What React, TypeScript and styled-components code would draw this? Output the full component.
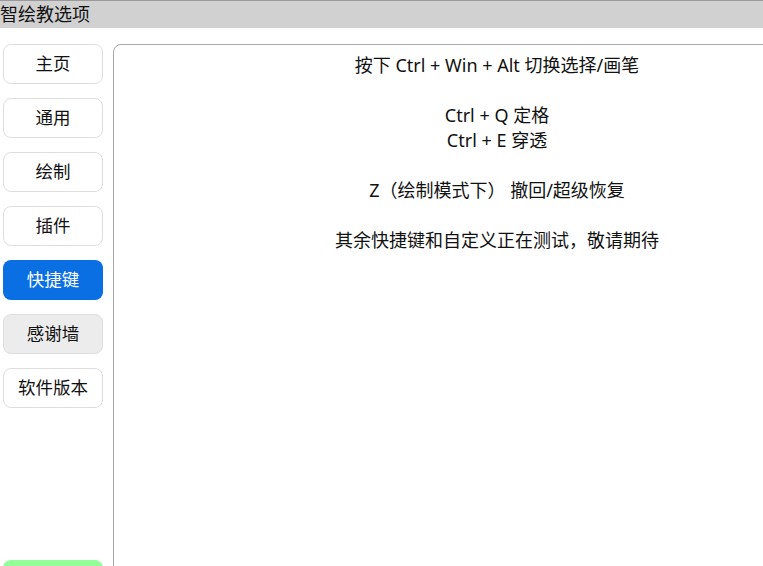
import React from "react";
import styled, { createGlobalStyle } from "styled-components";

const Global = createGlobalStyle`
  html, body { margin: 0; padding: 0; background: #fff; overflow: hidden; }
  body { font-family: "Noto Sans", "Noto Sans CJK SC", sans-serif; color: #111; }
`;

const Page = styled.div`
  width: 763px;
  height: 566px;
  overflow: hidden;
  display: flex;
  flex-direction: column;
`;

const TitleBar = styled.div`
  height: 27px;
  flex: none;
  background: #d1d1d1;
  border-top: 1px solid #9a9a9a;
  font-size: 18px;
  line-height: 26px;
  color: #111;
`;

const Body = styled.div`
  display: flex;
  padding: 16px 0 0 3px;
  gap: 10px;
  flex: 1;
  min-height: 0;
`;

const Sidebar = styled.div`
  width: 100px;
  flex: none;
  display: flex;
  flex-direction: column;
  gap: 14px;
  height: 556px;
`;

const NavButton = styled.div<{ $variant?: "active" | "hover" | "green" }>`
  height: 40px;
  box-sizing: border-box;
  padding-bottom: 4px;
  border-radius: 8px;
  border: 1px solid ${(p) => (p.$variant === "active" || p.$variant === "green" ? "transparent" : "#dedede")};
  background: ${(p) =>
    p.$variant === "active" ? "#0a6fe3" : p.$variant === "hover" ? "#ececec" : p.$variant === "green" ? "#92ff98" : "#fff"};
  color: ${(p) => (p.$variant === "active" ? "#fff" : "#111")};
  display: flex;
  align-items: center;
  justify-content: center;
  font-size: 17.5px;
  flex: none;
  ${(p) => (p.$variant === "green" ? "margin-top: auto;" : "")}
`;

const Panel = styled.div`
  width: 768px;
  flex: none;
  height: 600px;
  box-sizing: border-box;
  border: 1px solid #a8a8a8;
  border-top-left-radius: 8px;
  padding-top: 8px;
  display: flex;
  flex-direction: column;
  align-items: center;
  font-size: 18px;
  line-height: 25px;
`;

const Line = styled.div`
  height: 25px;
  white-space: pre;
`;

export default function App() {
  const lines = [
    "按下 Ctrl + Win + Alt 切换选择/画笔",
    "",
    "Ctrl + Q 定格",
    "Ctrl + E 穿透",
    "",
    "Z（绘制模式下） 撤回/超级恢复",
    "",
    "其余快捷键和自定义正在测试，敬请期待",
  ];
  return (
    <Page>
      <Global />
      <TitleBar>智绘教选项</TitleBar>
      <Body>
        <Sidebar>
          <NavButton>主页</NavButton>
          <NavButton>通用</NavButton>
          <NavButton>绘制</NavButton>
          <NavButton>插件</NavButton>
          <NavButton $variant="active">快捷键</NavButton>
          <NavButton $variant="hover">感谢墙</NavButton>
          <NavButton>软件版本</NavButton>
          <NavButton $variant="green" />
        </Sidebar>
        <Panel>
          {lines.map((l, i) => (
            <Line key={i}>{l}</Line>
          ))}
        </Panel>
      </Body>
    </Page>
  );
}
